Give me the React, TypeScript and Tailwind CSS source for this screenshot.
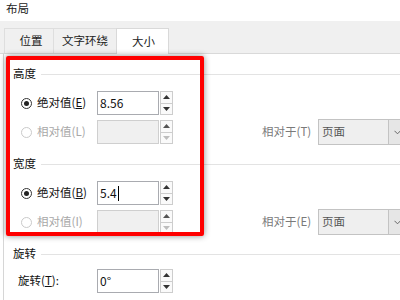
import React from "react";

const Up = ({ c = "#333" }: { c?: string }) => (
  <svg width="7" height="4" viewBox="0 0 7 4"><polygon points="0,4 3.5,0 7,4" fill={c} /></svg>
);
const Down = ({ c = "#333" }: { c?: string }) => (
  <svg width="7" height="4" viewBox="0 0 7 4"><polygon points="0,0 3.5,4 7,0" fill={c} /></svg>
);

function Spin({ value, disabled, caret }: { value?: string; disabled?: boolean; caret?: boolean }) {
  return (
    <div className="flex w-[75px] h-[24px] shrink-0">
      <div
        className={
          disabled
            ? "w-[62px] h-full border border-[#cfcfcf] bg-[#f0f0f0] shrink-0"
            : "w-[62px] h-full border border-[#a9abb0] bg-white flex items-center pl-[2px] text-[12px] text-[#111] shrink-0"
        }
      >
        {value}
        {caret && <span className="w-px h-[15px] bg-black ml-[1px]" />}
      </div>
      <div className="w-[13px] h-full flex flex-col ml-px shrink-0">
        <div className="flex-1 flex items-center justify-center border border-[#cdcdcd] bg-[#fafafa]">
          <Up c={disabled ? "#555" : "#333"} />
        </div>
        <div className="flex-1 flex items-center justify-center border border-t-0 border-[#cdcdcd] bg-[#fafafa]">
          <Down c={disabled ? "#bdbdbd" : "#333"} />
        </div>
      </div>
    </div>
  );
}

function Radio({ checked }: { checked?: boolean }) {
  return checked ? (
    <div className="w-[11px] h-[11px] rounded-full border border-[#333] bg-white flex items-center justify-center shrink-0">
      <div className="w-[5px] h-[5px] rounded-full bg-[#222]" />
    </div>
  ) : (
    <div className="w-[11px] h-[11px] rounded-full border border-[#cacaca] bg-white shrink-0" />
  );
}

function Select({ label, k }: { label: string; k: string }) {
  return (
    <div className="flex items-center ml-[90px] shrink-0">
      <div className="w-[56px] text-[#7a7a7a] shrink-0">
        相对于(<span>{k}</span>)
      </div>
      <div className="flex w-[88px] h-[26px] border border-[#c3c3c3] bg-[#efefef] shrink-0">
        <div className="flex-1 flex items-center pl-[3px] text-[#555]">{label}</div>
        <div className="w-[17px] border-l border-[#c3c3c3] bg-[#e6e6e6] flex items-center justify-center">
          <svg width="7" height="5" viewBox="0 0 7 5"><polyline points="0.5,0.8 3.5,3.8 6.5,0.8" fill="none" stroke="#666" strokeWidth="1" /></svg>
        </div>
      </div>
    </div>
  );
}

function Header({ t }: { t: string }) {
  return (
    <div className="flex items-center h-[16px] pl-[9px]">
      <span className="text-[#111]">{t}</span>
      <div className="flex-1 h-px bg-[#e3e3e3] ml-[5px]" />
    </div>
  );
}

function Section({ title, k1, k2, value, caret, k3 }: { title: string; k1: string; k2: string; value: string; caret?: boolean; k3: string }) {
  return (
    <div className="mb-[12px]">
      <Header t={title} />
      <div className="mt-[9px] flex flex-col gap-[5px] pl-[17px]">
        <div className="flex items-center h-[24px]">
          <Radio checked />
          <div className="w-[65px] pl-[5px] text-[#111] shrink-0">
            绝对值(<span className="underline">{k1}</span>)
          </div>
          <Spin value={value} caret={caret} />
        </div>
        <div className="flex items-center h-[24px]">
          <Radio />
          <div className="w-[65px] pl-[5px] text-[#a8a8a8] shrink-0">
            相对值(<span>{k2}</span>)
          </div>
          <Spin disabled />
          <Select label="页面" k={k3} />
        </div>
      </div>
    </div>
  );
}

export default function App() {
  return (
    <div className="relative w-[400px] h-[300px] overflow-hidden bg-white text-[11.5px] font-['Noto_Sans_CJK_SC','Microsoft_YaHei',sans-serif] leading-none">
      <div className="h-[21px] pl-[6px] pt-[1px] leading-[14px] text-[#222]">布局</div>
      <div className="h-[33px] bg-[#f0f0f0] border-b border-[#d9d9d9] flex items-end pl-[4px]">
        <div className="w-[49px] h-[25px] border-l border-t border-[#dedede] flex items-center justify-center text-[#222] pl-[4px]">位置</div>
        <div className="w-[63px] h-[25px] border-l border-t border-[#dedede] flex items-center justify-center text-[#222]">文字环绕</div>
        <div className="w-[53px] h-[26px] -mb-px border-l border-r border-t border-[#d9d9d9] bg-white flex items-center justify-center text-[#222] pl-[2px]">大小</div>
      </div>
      <div className="ml-[3px] border-l border-[#d6d6d6] pt-[12px] h-[246px]">
        <Section title="高度" k1="E" k2="L" k3="T" value="8.56" />
        <Section title="宽度" k1="B" k2="I" k3="E" value="5.4" caret />
        <div>
          <Header t="旋转" />
          <div className="mt-[7px] flex items-center h-[24px] pl-[14px]">
            <div className="w-[79px] text-[#111] shrink-0">
              旋转(<span className="underline">T</span>):
            </div>
            <Spin value="0°" />
          </div>
        </div>
      </div>
      <div className="absolute left-[6px] top-[56px] w-[198px] h-[180px] border-[4px] border-[#ff0000] rounded-[2px] shadow-[0_0_6px_rgba(0,0,0,0.45)]" />
    </div>
  );
}
